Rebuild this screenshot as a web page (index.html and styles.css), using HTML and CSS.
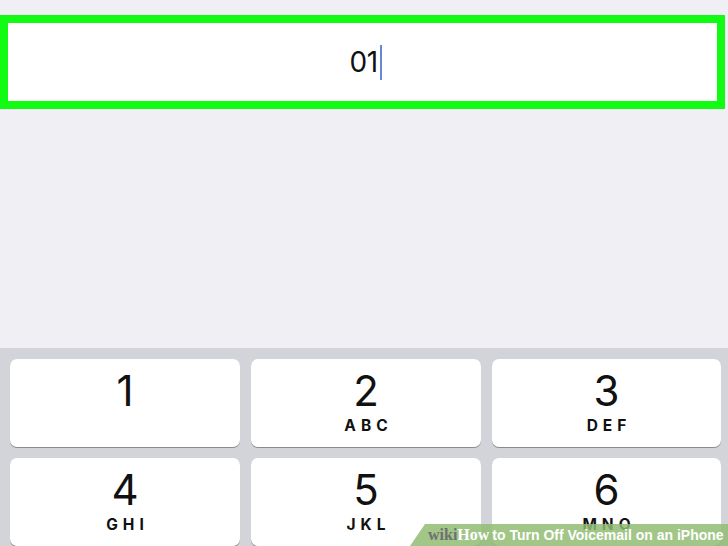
FILE: index.html
```html
<!DOCTYPE html>
<html>
<head>
<meta charset="utf-8">
<link rel="stylesheet" href="styles.css">
</head>
<body>
<div class="screen">
  <div class="top">
    <div class="field">
      <span class="value">01</span><span class="cursor"></span>
    </div>
  </div>
  <div class="keypad">
    <div class="key"><span class="digit">1</span><span class="letters"></span></div>
    <div class="key"><span class="digit">2</span><span class="letters">ABC</span></div>
    <div class="key"><span class="digit">3</span><span class="letters">DEF</span></div>
    <div class="key"><span class="digit">4</span><span class="letters">GHI</span></div>
    <div class="key"><span class="digit">5</span><span class="letters">JKL</span></div>
    <div class="key"><span class="digit">6</span><span class="letters">MNO</span></div>
  </div>
  <div class="banner"><span class="wiki">wiki</span><span class="how">How</span><span class="title"> to Turn Off Voicemail on an iPhone</span></div>
</div>
</body>
</html>
```

FILE: styles.css
```css
* { box-sizing: border-box; }
html, body { margin: 0; padding: 0; }
body { width: 728px; height: 546px; overflow: hidden; font-family: Inter, "Liberation Sans", sans-serif; }
.screen { position: relative; width: 728px; height: 546px; background: #efeff4; display: flex; flex-direction: column; overflow: hidden; }
.top { height: 348px; padding-top: 15px; padding-right: 3px; }
.field {
  height: 94px;
  border: 8px solid #12fb12;
  background: #fff;
  display: flex;
  align-items: center;
  justify-content: center;
  padding-left: 6px;
}
.value { font-size: 28px; color: #111; font-weight: 400; letter-spacing: -0.5px; }
.cursor { display: inline-block; width: 2px; height: 35px; background: #6a86d6; margin-left: 2px; }
.keypad {
  flex: 1;
  background: #d2d4da;
  display: grid;
  grid-template-columns: 230px 230px 229px;
  grid-auto-rows: 88px;
  column-gap: 11px;
  row-gap: 11px;
  padding: 11px 8px 0 10px;
}
.key {
  background: #fff;
  border-radius: 7px;
  box-shadow: 0 1px 0 #8a8b8e;
  display: flex;
  flex-direction: column;
  align-items: center;
  padding-top: 10px;
}
.digit { font-size: 42px; line-height: 44px; color: #111; font-weight: 400; }
.letters { font-size: 15.5px; font-weight: 700; letter-spacing: 5px; margin-left: 5px; color: #111; line-height: 18px; margin-top: 4px; }
.banner {
  position: absolute;
  right: 0;
  bottom: 0;
  width: 318px;
  height: 22px;
  background: rgba(145, 188, 115, 0.85);
  clip-path: polygon(15px 0, 100% 0, 100% 100%, 0 100%);
  display: flex;
  align-items: center;
  padding-left: 18px;
  white-space: nowrap;
  font-size: 14px;
  font-weight: 700;
}
.wiki { font-family: "Liberation Serif", serif; color: #6f6f6f; font-size: 16px; }
.how { font-family: "Liberation Serif", serif; color: #fff; font-size: 16px; }
.title { font-family: "Liberation Sans", sans-serif; color: #fff; margin-left: 3px; }
```
